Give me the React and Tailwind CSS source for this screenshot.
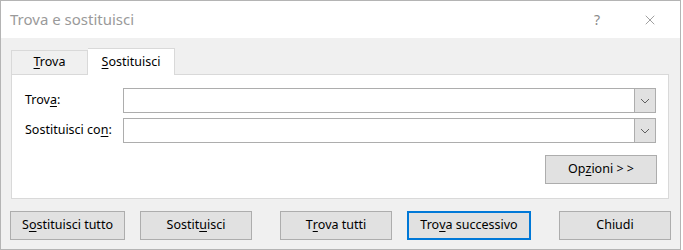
import { X } from 'lucide-react'

const font = { fontFamily: '"Noto Sans", "Liberation Sans", sans-serif' }

function Key({ children }) {
  return <span className="underline underline-offset-2 decoration-1">{children}</span>
}

function Chevron() {
  return (
    <svg width="10" height="6" viewBox="0 0 10 6" className="block">
      <path d="M1 1 L5 5 L9 1" fill="none" stroke="#606060" strokeWidth="1" />
    </svg>
  )
}

function Combo() {
  return (
    <div className="flex h-[25px] w-[533px]">
      <div className="flex-1 border border-[#adadad] border-r-0 bg-white" />
      <div className="w-[22px] border border-[#adadad] bg-[#e1e1e1] flex items-center justify-center">
        <Chevron />
      </div>
    </div>
  )
}

function Btn({ w, ml, primary, children }) {
  return (
    <button
      className={
        'h-[29px] text-[12.5px] text-black bg-[#e1e1e1] flex items-center justify-center ' +
        (primary ? 'border-2 border-[#0078d7]' : 'border border-[#adadad]')
      }
      style={{ width: w, marginLeft: ml }}>
      {children}
    </button>
  )
}

export default function App() {
  return (
    <div className="w-[683px] h-[250px] bg-white overflow-hidden" style={font}>
      <div className="w-[681px] h-[250px] border border-[#b4b4b4] bg-[#f0f0f0] flex flex-col">
        {/* title bar */}
        <div className="h-[37px] bg-white flex items-center shrink-0">
          <span className="ml-[9px] text-[15px] text-[#9a9a9a]">Trova e sostituisci</span>
          <span className="ml-auto mr-[42px] text-[14px] text-[#8a8a8a]">?</span>
          <X size={16} strokeWidth={1} className="mr-[22px] text-[#6f6f6f]" />
        </div>

        {/* tabs */}
        <div className="flex items-end mt-[9px] ml-[10px] h-[27px]">
          <div className="w-[77px] h-[24px] border border-b-0 border-[#d9d9d9] bg-[#f0f0f0] flex items-center justify-center text-[12.5px] text-black">
            <span><Key>T</Key>rova</span>
          </div>
          <div className="w-[87px] h-[27px] border border-b-0 border-l-0 border-[#d9d9d9] bg-white flex items-center justify-center text-[12.5px] text-black relative top-[1px]">
            <span><Key>S</Key>ostituisci</span>
          </div>
        </div>

        {/* panel */}
        <div className="ml-[10px] w-[658px] h-[125px] border border-[#d9d9d9] bg-white flex flex-col text-[12.5px] text-black">
          <div className="flex items-center mt-[13px]">
            <span className="w-[98px] ml-[13px]">Trov<Key>a</Key>:</span>
            <Combo />
          </div>
          <div className="flex items-center mt-[5px]">
            <span className="w-[98px] ml-[13px]">Sostituisci co<Key>n</Key>:</span>
            <Combo />
          </div>
          <div className="flex justify-end mt-[12px] mr-[11px]">
            <Btn w={112}>Op<Key>z</Key>ioni &gt; &gt;</Btn>
          </div>
        </div>

        {/* buttons */}
        <div className="flex mt-[12px]">
          <Btn w={115} ml={9}>S<Key>o</Key>stituisci tutto</Btn>
          <Btn w={112} ml={15}>Sostit<Key>u</Key>isci</Btn>
          <Btn w={112} ml={28}>T<Key>r</Key>ova tutti</Btn>
          <Btn w={124} ml={15} primary>Tro<Key>v</Key>a successivo</Btn>
          <Btn w={112} ml={28}>Chiudi</Btn>
        </div>
      </div>
    </div>
  )
}
